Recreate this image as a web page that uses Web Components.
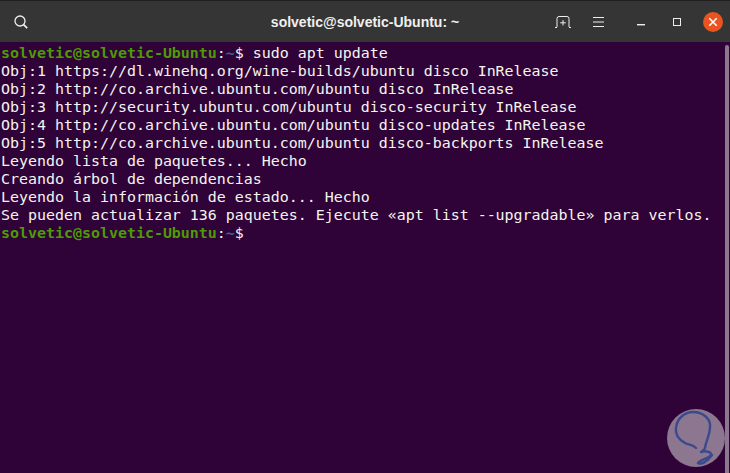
<!DOCTYPE html>
<html>
<head>
<meta charset="utf-8">
<style>
  html, body { margin: 0; height: 100%; background: #2f0337; overflow: hidden; }
  body { position: relative; }
</style>
</head>
<body>
<term-window>
  <title-bar slot="bar" title="solvetic@solvetic-Ubuntu: ~"></title-bar>
  <term-line><term-prompt></term-prompt> sudo apt update</term-line>
  <term-line>Obj:1 https://dl.winehq.org/wine-builds/ubuntu disco InRelease</term-line>
  <term-line>Obj:2 http://co.archive.ubuntu.com/ubuntu disco InRelease</term-line>
  <term-line>Obj:3 http://security.ubuntu.com/ubuntu disco-security InRelease</term-line>
  <term-line>Obj:4 http://co.archive.ubuntu.com/ubuntu disco-updates InRelease</term-line>
  <term-line>Obj:5 http://co.archive.ubuntu.com/ubuntu disco-backports InRelease</term-line>
  <term-line>Leyendo lista de paquetes... Hecho</term-line>
  <term-line>Creando árbol de dependencias</term-line>
  <term-line>Leyendo la información de estado... Hecho</term-line>
  <term-line>Se pueden actualizar 136 paquetes. Ejecute «apt list --upgradable» para verlos.</term-line>
  <term-line><term-prompt></term-prompt></term-line>
</term-window>
<watermark-badge></watermark-badge>
<script>
class TermWindow extends HTMLElement {
  connectedCallback() {
    this.attachShadow({ mode: 'open' });
    this.shadowRoot.innerHTML = `
      <style>
        :host { display: flex; flex-direction: column; width: 730px; height: 473px; background: #2f0337; }
        .body { flex: 1; display: flex; min-height: 0; }
        .lines { flex: 1; min-width: 0; padding: 2px 0 0 1px; }
        .scroll { width: 4px; background: #8d7690; margin: 3px 1px 0 0; border-radius: 2px 2px 0 0; }
      </style>
      <slot name="bar"></slot>
      <div class="body">
        <div class="lines"><slot></slot></div>
        <div class="scroll"></div>
      </div>`;
  }
}

class TitleBar extends HTMLElement {
  connectedCallback() {
    this.attachShadow({ mode: 'open' });
    this.shadowRoot.innerHTML = `
      <style>
        :host { display: flex; align-items: center; height: 42px; box-sizing: border-box; background: #353535; border-top: 1px solid #1e1e1e; position: relative; color: #f0f0f0; }
        .title { position: absolute; left: 0; right: 0; top: 13px; text-align: center; font: bold 14px "Liberation Sans", Arial, sans-serif; }
        svg { display: block; flex: none; }
        .search { margin-left: 14px; }
        .spacer { flex: 1; }
        .tools { display: flex; align-items: center; margin-right: 7px; }
      </style>
      <svg class="search" width="14" height="14" viewBox="0 0 14 14" fill="none" stroke="#eeeeee" stroke-width="1.3">
        <circle cx="6" cy="6" r="5"/><path d="M9.6 9.6l3.6 3.6" stroke-width="1.7"/>
      </svg>
      <div class="title">${this.getAttribute('title')}</div>
      <div class="spacer"></div>
      <div class="tools">
        <svg width="16" height="12" viewBox="0 0 16 12" fill="none" stroke="#eeeeee" style="margin-right:22px">
          <path d="M0 11.5h2M2 11V2.5q0-2 2-2h8q2 0 2 2V11M14 11.5h2" />
          <path d="M8 4v5.5M5.2 6.8h5.6" />
        </svg>
        <svg width="11" height="10" viewBox="0 0 11 10" stroke="#eeeeee" style="margin-right:33px">
          <path d="M0 .5h11M0 5h11M0 9.5h11"/>
        </svg>
        <svg width="8" height="2" viewBox="0 0 8 2" style="margin-right:28px;margin-top:6px">
          <rect width="8" height="1.4" fill="#eeeeee"/>
        </svg>
        <svg width="8" height="8" viewBox="0 0 8 8" fill="none" stroke="#eeeeee" style="margin-right:22px">
          <rect x=".5" y=".5" width="7" height="7"/>
        </svg>
        <svg width="20" height="20" viewBox="0 0 20 20">
          <circle cx="10" cy="10" r="10" fill="#e95420"/>
          <path d="M6.3 6.3l7.4 7.4M13.7 6.3l-7.4 7.4" stroke="#fff" stroke-width="1.6"/>
        </svg>
      </div>`;
  }
}

class TermLine extends HTMLElement {
  connectedCallback() {
    this.attachShadow({ mode: 'open' });
    this.shadowRoot.innerHTML = `
      <style>
        :host { display: block; height: 18px; color: #f4f4f0; font: 14.95px/18px "DejaVu Sans Mono", monospace; }
        .row { white-space: pre; }
      </style>
      <div class="row"><slot></slot></div>`;
  }
}

class TermPrompt extends HTMLElement {
  connectedCallback() {
    this.attachShadow({ mode: 'open' });
    this.shadowRoot.innerHTML = `<style>
        :host { display: inline; }
        .host { color: #4e9a06; font-weight: bold; }
        .path { color: #3465a4; font-weight: bold; }
      </style><span class="host">solvetic@solvetic-Ubuntu</span>:<span class="path">~</span>$`;
  }
}

class WatermarkBadge extends HTMLElement {
  connectedCallback() {
    this.attachShadow({ mode: 'open' });
    this.shadowRoot.innerHTML = `
      <style>
        :host { position: absolute; left: 667px; top: 409px; width: 58px; height: 58px; display: block; }
      </style>
      <svg width="58" height="58" viewBox="0 0 58 58">
        <circle cx="29" cy="29" r="29" fill="#8d7690"/>
        <path d="M29 39C25 35 21 36 18 34C11 30 8 25 9 19C10 9 18 3 26 3C36 3 44 10 43 18C43 26 39 31 38 39C38 41 35 42 34 43C37 42 43 42 44 45C44 49 34 50 31 54C34 56 40 53 45 46" fill="none" stroke="#3a4a8c" stroke-width="2.4" stroke-linecap="round" stroke-linejoin="round"/>
      </svg>`;
  }
}

customElements.define('term-window', TermWindow);
customElements.define('title-bar', TitleBar);
customElements.define('term-line', TermLine);
customElements.define('term-prompt', TermPrompt);
customElements.define('watermark-badge', WatermarkBadge);
</script>
</body>
</html>
